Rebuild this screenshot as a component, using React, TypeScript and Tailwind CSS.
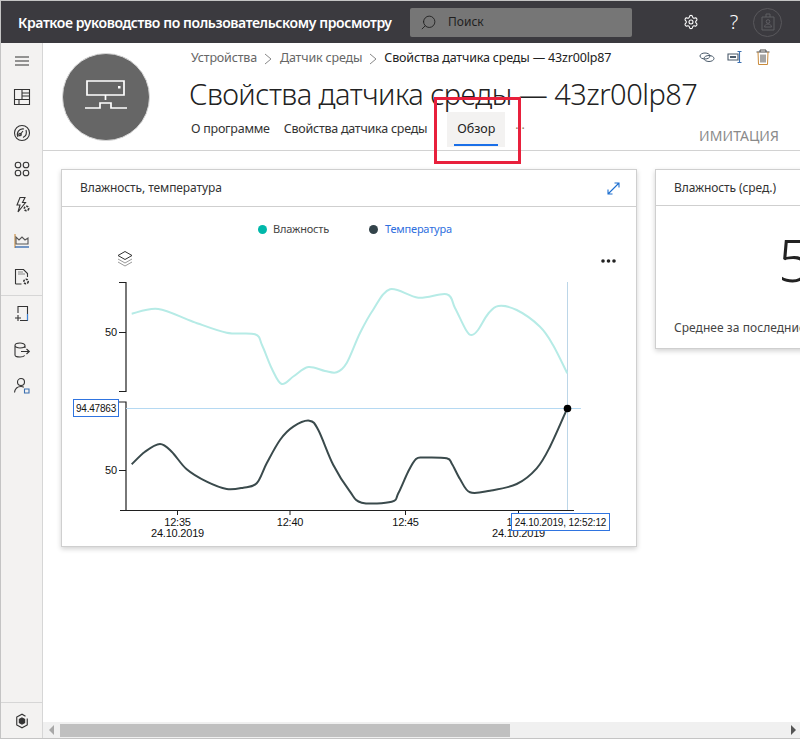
import { Settings, Search } from "lucide-react";

const HUMIDITY: [number, number][] = [
  [131.7, 313.7], [158.3, 309], [193, 321.7], [226.7, 332.7], [255, 334.3], [262, 345], [272, 369], [281.7, 384], [294, 376], [308.3, 367], [325, 371], [336.7, 372.3],
  [346.7, 363], [360, 333], [373, 310], [390, 289.3], [418.3, 297.7], [446.7, 294.3], [455, 308], [466, 330], [471.7, 335], [478, 330], [488, 314], [498.3, 306],
  [516.7, 310], [540, 326.7], [553, 345], [567.3, 373.3],
];

const TEMPERATURE: [number, number][] = [
  [131.7, 464.3], [145, 451.7], [160, 444], [171.7, 451.7], [186.7, 469.3], [206.7, 481.7], [226.7, 489], [243.3, 487.7], [256.7, 483.3],
  [266.7, 463.3], [280, 440], [293.3, 426.7], [309.3, 420.7], [318.3, 430], [333.3, 465], [350, 491.7], [361.7, 502.7], [391.7, 501.7],
  [398.3, 493.3], [408, 472], [416, 459], [424, 457.5], [446.7, 458.3], [452, 464], [460, 479], [470, 492.3], [490, 490.7], [516.7, 484], [536.7, 468.3],
  [550, 446.7], [567.3, 408.3],
];

function smooth(pts: [number, number][]) {
  let d = `M${pts[0][0]} ${pts[0][1]}`;
  for (let i = 0; i < pts.length - 1; i++) {
    const p0 = pts[i - 1] ?? pts[i];
    const p1 = pts[i];
    const p2 = pts[i + 1];
    const p3 = pts[i + 2] ?? p2;
    const c1x = p1[0] + (p2[0] - p0[0]) / 6;
    const c1y = p1[1] + (p2[1] - p0[1]) / 6;
    const c2x = p2[0] - (p3[0] - p1[0]) / 6;
    const c2y = p2[1] - (p3[1] - p1[1]) / 6;
    d += ` C${c1x.toFixed(1)} ${c1y.toFixed(1)} ${c2x.toFixed(1)} ${c2y.toFixed(1)} ${p2[0]} ${p2[1]}`;
  }
  return d;
}

function Icon({ children, size = 18 }: { children: React.ReactNode; size?: number }) {
  return (
    <svg width={size} height={size} viewBox="0 0 18 18" fill="none" stroke="#333" strokeWidth="1.1">
      {children}
    </svg>
  );
}

const NAV_TOP = [
  <Icon key="menu"><path d="M2 5h14M2 9h14M2 13h14" /></Icon>,
  <Icon key="dash"><path d="M1.500 1.500h15v15h-15zM9 1.500V11.500M1.500 11.500h15M9 5h7.500M9 8h7.500M6 11.500v5" /></Icon>,
  <Icon key="gauge"><circle cx="9" cy="9" r="7.500" /><path d="M5 13c-2-4 1-9 6-8M13 6c1 3 0 6-3 7.500M6 12l4-5" /><circle cx="7" cy="10.500" r="1.300" /></Icon>,
  <Icon key="apps"><circle cx="5" cy="5" r="2.800" /><circle cx="13" cy="5" r="2.800" /><circle cx="5" cy="13" r="2.800" /><circle cx="13" cy="13" r="2.800" /></Icon>,
  <Icon key="rules"><path d="M7 1.500h5L9.500 6.500h3L5 16l2-7H4z" /><circle cx="13.500" cy="12.500" r="2.200" strokeWidth="1.600" strokeDasharray="2 1" /></Icon>,
  <Icon key="chart"><path d="M2 2v14" stroke="#c98a3a" /><path d="M3 12V5l3 3 3-3 3 3 3-2v6z" stroke="#555" /><path d="M2 15h14" stroke="#3b6fb0" strokeWidth="1.400" /></Icon>,
  <Icon key="doc"><path d="M2.500 16V1.500h8l4 4V9M2.500 16h6" /><path d="M5 4h5M5 6h7" stroke="#888" /><circle cx="13" cy="13.500" r="2.200" strokeWidth="1.600" strokeDasharray="2 1" /></Icon>,
];

const NAV_MID = [
  <Icon key="add"><path d="M5 8V1.500h9.500v14H7" /><path d="M14.500 9v6.500" stroke="#3b82d8" /><path d="M5 10v6M2 13h6" /></Icon>,
  <Icon key="export"><path d="M12 4.500c0 1.400-2.400 2.500-5 2.500S2 5.900 2 4.500 4.400 2 7 2s5 1.100 5 2.500zM2 4.500v9.500c0 1 2.400 2 5 2 2 0 4-.6 4.700-1.500M12 4.500V7" /><path d="M8 10.500h8M13.500 8l2.800 2.500-2.800 2.500" /></Icon>,
  <Icon key="user"><circle cx="8" cy="5" r="3.500" /><path d="M1.500 15.500c.5-3.500 3-6 6.500-6 1 0 2 .2 2.800.7" /><path d="M11.500 12h4.500v4h-4.500z" stroke="#3b6fb0" /></Icon>,
];

function Sidebar() {
  return (
    <aside className="w-[42px] shrink-0 flex flex-col bg-[#f3f2f1] border-r border-[#d6d6d6]">
      {NAV_TOP.map((icon, i) => (
        <div key={i} className="h-[36px] flex items-center justify-center">{icon}</div>
      ))}
      <div className="h-px bg-[#d6d6d6]" />
      {NAV_MID.map((icon, i) => (
        <div key={i} className="h-[36px] flex items-center justify-center">{icon}</div>
      ))}
      <div className="flex-1" />
      <div className="h-[36px] border-t border-[#d6d6d6] flex items-center justify-center">
        <svg width="14" height="16" viewBox="0 0 16 18" fill="none" stroke="#333" strokeWidth="1.300">
          <path d="M12 3.500 8 1.200 2 4.500v9l6 3.300 6-3.300V6" />
          <path d="M8 5.500l3 1.700v3.600l-3 1.700-3-1.700V7.200z" fill="#333" />
        </svg>
      </div>
    </aside>
  );
}

function TopBar() {
  return (
    <header className="h-[42px] shrink-0 bg-[#3b3a3f] flex items-center text-white">
      <div className="ml-[17px] w-[392px] shrink-0 text-[14px] font-semibold tracking-[-0.4px] whitespace-nowrap">
        Краткое руководство по пользовательскому просмотру
      </div>
      <div className="w-[222px] h-[29px] bg-[#767676] rounded-[2px] flex items-center pl-[10px] gap-[11px] text-[#1f1f1f] text-[12px]">
        <Search size={17} strokeWidth={1.300} className="-scale-x-100" color="#222" />
        <span>Поиск</span>
      </div>
      <Settings size={16} strokeWidth={1.600} className="ml-[51px]" color="#fff" />
      <span className="ml-[28px] w-[14px] text-center text-[20px] font-light leading-none">?</span>
      <div className="ml-[12px] w-[29px] h-[29px] rounded-full border border-[#59585c] flex items-center justify-center">
        <svg width="14" height="18" viewBox="0 0 14 18" fill="none" stroke="#5f5e63" strokeWidth="1">
          <path d="M1 4h12v13H1zM5 4V1M9 4V1M5 1h4" />
          <circle cx="7" cy="8.500" r="1.800" />
          <path d="M3.500 14c.3-2 1.500-3 3.500-3s3.200 1 3.500 3z" />
        </svg>
      </div>
    </header>
  );
}

function PageHeader() {
  return (
    <section className="h-[108px] shrink-0 border-b border-[#d2d2d2] flex relative">
      <div className="ml-[19px] mt-[10px] w-[88px] h-[88px] rounded-full bg-[#666666] flex items-center justify-center shrink-0 border border-[#d8d8d8]">
        <svg width="44" height="34" viewBox="0 0 44 34" fill="none" stroke="#fff" strokeWidth="1.700">
          <path d="M3 1h37v14H3zM21.500 15v5M13 28h3v-5h11v5h3M1 28h12M30 28h13" />
          <path d="M34 6h2.500v2.500H34z" fill="#fff" stroke="none" />
        </svg>
      </div>
      <div className="ml-[39px] flex-1 min-w-0">
        <div className="h-[31px] flex items-center text-[12.500px] text-[#666] pl-[2px] tracking-[-0.17px] whitespace-nowrap">
          <span>Устройства</span>
          <svg width="10" height="12" viewBox="0 0 10 12" className="ml-[6px] mr-[7px]" fill="none" stroke="#888"><path d="M2 1l6 5-6 5" /></svg>
          <span>Датчик среды</span>
          <svg width="10" height="12" viewBox="0 0 10 12" className="ml-[6px] mr-[6px]" fill="none" stroke="#888"><path d="M2 1l6 5-6 5" /></svg>
          <span className="text-[#222]">Свойства датчика среды — 43zr00lp87</span>
        </div>
        <h1 className="text-[29px] font-light text-[#222] leading-[40px] tracking-[-0.53px] whitespace-nowrap">
          Свойства датчика среды — 43zr00lp87
        </h1>
        <nav className="-mt-[1px] flex items-start text-[12.500px] text-[#333] tracking-[-0.25px] pl-[2px]">
          <span className="h-[33px] flex items-center">О программе</span>
          <span className="h-[33px] flex items-center ml-[14px]">Свойства датчика среды</span>
          <span className="relative ml-[20px] w-[58px] h-[35px] -mt-[1px] bg-[#f3f2f1] flex items-center justify-center text-[#222] tracking-[0px]">
            Обзор
            <span className="absolute left-[7px] right-[7px] bottom-[1px] h-[2px] bg-[#1a6fe8]" />
          </span>
          <span className="ml-[10px] h-[33px] flex items-center text-[#9a7a60]">···</span>
        </nav>
      </div>
      <div className="absolute top-[6px] left-[656px] flex items-center gap-[12px]">
        <svg width="16" height="16" viewBox="0 0 16 16" fill="none" stroke="#4a5a6a" strokeWidth="1"><ellipse cx="6" cy="7" rx="5" ry="3" /><ellipse cx="10" cy="9.500" rx="5" ry="3" /></svg>
        <svg width="16" height="16" viewBox="0 0 16 16" fill="none" stroke="#4a5a6a" strokeWidth="1.100"><path d="M1 5h10v6H1z" /><path d="M3 8h6" strokeWidth="2" /><path d="M12.500 2.500v11M10.500 2.500h4M10.500 13.500h4" stroke="#3b6fb0" /></svg>
        <svg width="16" height="16" viewBox="0 0 16 16" fill="none" stroke="#4a4a4a" strokeWidth="1"><path d="M1.500 3h13M5 3V1h6v2" /><path d="M3 3l.5 12.500h9L13 3" stroke="#c98a3a" /><path d="M6 5.500v8M8 5.500v8M10 5.500v8" /></svg>
      </div>
      <span className="absolute right-[21px] top-[82px] text-[14px] tracking-[0.05px] text-[#8a8a8a]">ИМИТАЦИЯ</span>
    </section>
  );
}

function Chart() {
  const ink = "#1f1f1f";
  const ticks: [number, string, boolean][] = [[177.500, "12:35", true], [290, "12:40", false], [405.500, "12:45", false], [518.500, "1", true]];
  return (
    <svg width="574" height="294" viewBox="62 251 574 294" className="block" fill="none">
      {/* layers icon */}
      <g stroke="#333" strokeWidth="1">
        <path d="M125 251.500l7 4-7 4-7-4z" fill="#fff" />
        <path d="M118 259l7 4 7-4M118 262l7 4 7-4" stroke="#999" />
      </g>
      <g fill="#222" stroke="none">
        <circle cx="603" cy="261" r="1.800" /><circle cx="608.500" cy="261" r="1.800" /><circle cx="614" cy="261" r="1.800" />
      </g>

      <path d="M119 282.500h7v109h-7M119 332.500h7" stroke={ink} strokeWidth="1.200" />
      <path d="M119 402h7v108.500M119 470.500h7M120 510.500h454" stroke={ink} strokeWidth="1.200" />
      {ticks.map(([x]) => (
        <path key={x} d={`M${x} 510v5`} stroke={ink} />
      ))}

      <path d="M567.500 282v228" stroke="#bcd6e8" />
      <path d="M126 408.500h455" stroke="#b5d9f2" />

      <path d={smooth(HUMIDITY)} stroke="#b6ebe6" strokeWidth="2" />
      <path d={smooth(TEMPERATURE)} stroke="#3a4a4c" strokeWidth="2" />
      <circle cx="567.500" cy="408.500" r="3.800" fill="#000" />

      <g fill="#111" stroke="none" className="font-['Liberation_Sans',sans-serif] text-[11px] tracking-[-0.2px]">
        <text x="105" y="336">50</text>
        <text x="105" y="474">50</text>
        {ticks.map(([x, t, date]) => (
          <g key={x}>
            <text x={x + (t === "1" ? -12 : 0)} y="526" textAnchor={t === "1" ? "start" : "middle"}>{t}</text>
            {date && <text x={x} y="537" textAnchor="middle">24.10.2019</text>}
          </g>
        ))}
      </g>

      <rect x="73.500" y="399.500" width="45" height="17" fill="#fff" stroke="#2f74e0" />
      <text x="96" y="412" textAnchor="middle" fill="#111" className="font-['Liberation_Sans',sans-serif] text-[10px] tracking-[-0.2px]">94.47863</text>
      <rect x="511.500" y="513.500" width="98" height="17" fill="#fff" stroke="#2f74e0" />
      <text x="560.500" y="526" textAnchor="middle" fill="#111" className="font-['Liberation_Sans',sans-serif] text-[10px] tracking-[-0.15px]">24.10.2019, 12:52:12</text>
    </svg>
  );
}

function Cards() {
  return (
    <div className="flex items-start gap-[18px] pl-[18px] pt-[18px]">
      <div className="w-[576px] h-[378px] shrink-0 bg-white border border-[#cfcfcf] shadow-[0_2px_5px_rgba(0,0,0,0.18)]">
        <div className="h-[37px] border-b border-[#cfcfcf] flex items-center justify-between pl-[18px] pr-[15px]">
          <span className="text-[12px] text-[#333] tracking-[-0.1px]">Влажность, температура</span>
          <svg width="15" height="15" viewBox="0 0 15 15" fill="none" stroke="#1d6fd0" strokeWidth="1.100">
            <path d="M2 13L13 2M8.500 2H13v4.500M2 8.500V13h4.500" />
          </svg>
        </div>
        <div className="h-[44px] flex items-center justify-center pl-[12px] text-[11px] tracking-[-0.2px]">
          <span className="w-[9px] h-[9px] rounded-full bg-[#00b8aa] mr-[6px]" />
          <span className="text-[#444]">Влажность</span>
          <span className="w-[9px] h-[9px] rounded-full bg-[#33434a] ml-[40px] mr-[7px]" />
          <span className="text-[#2f6fde]">Температура</span>
        </div>
        <Chart />
      </div>
      <div className="w-[400px] h-[180px] shrink-0 bg-white border border-[#cfcfcf] shadow-[0_2px_5px_rgba(0,0,0,0.18)]">
        <div className="h-[36px] border-b border-[#cfcfcf] flex items-center pl-[18px] text-[12px] text-[#333] tracking-[-0.1px]">
          Влажность (сред.)
        </div>
        <div className="pl-[122px] pt-[16px] h-[100px] text-[58px] leading-[76px] font-light text-[#222]">5</div>
        <div className="pl-[18px] pt-[13px] text-[12px] text-[#444] tracking-[0.05px] whitespace-nowrap">Среднее за последние 30 минут</div>
      </div>
    </div>
  );
}

function Scrollbar() {
  return (
    <div className="h-[16px] shrink-0 bg-[#f0f0f0] flex items-center relative">
      <svg width="6" height="10" viewBox="0 0 6 10" className="ml-[6px]"><path d="M5 0v10L0 5z" fill="#a8a8a8" /></svg>
      <div className="ml-[5px] w-[450px] h-[13px] mb-[1px] bg-[#c0c0c0] self-end" />
      <svg width="6" height="10" viewBox="0 0 6 10" className="ml-auto mr-[4px]"><path d="M1 0v10l5-5z" fill="#555" /></svg>
    </div>
  );
}

export default function App() {
  return (
    <div className="relative h-[739px] w-[800px] overflow-hidden bg-white flex flex-col border-l border-y border-[#c4c4c4] font-['Noto_Sans',sans-serif]">
      <TopBar />
      <div className="flex flex-1 min-h-0">
        <Sidebar />
        <main className="flex-1 min-w-0 flex flex-col">
          <PageHeader />
          <div className="flex-1 overflow-hidden">
            <Cards />
          </div>
          <Scrollbar />
        </main>
      </div>
      {/* annotation drawn over the screenshot */}
      <div className="absolute left-[433px] top-[96px] w-[87px] h-[67px] border-[3px] border-[#e8203c] pointer-events-none" />
    </div>
  );
}
